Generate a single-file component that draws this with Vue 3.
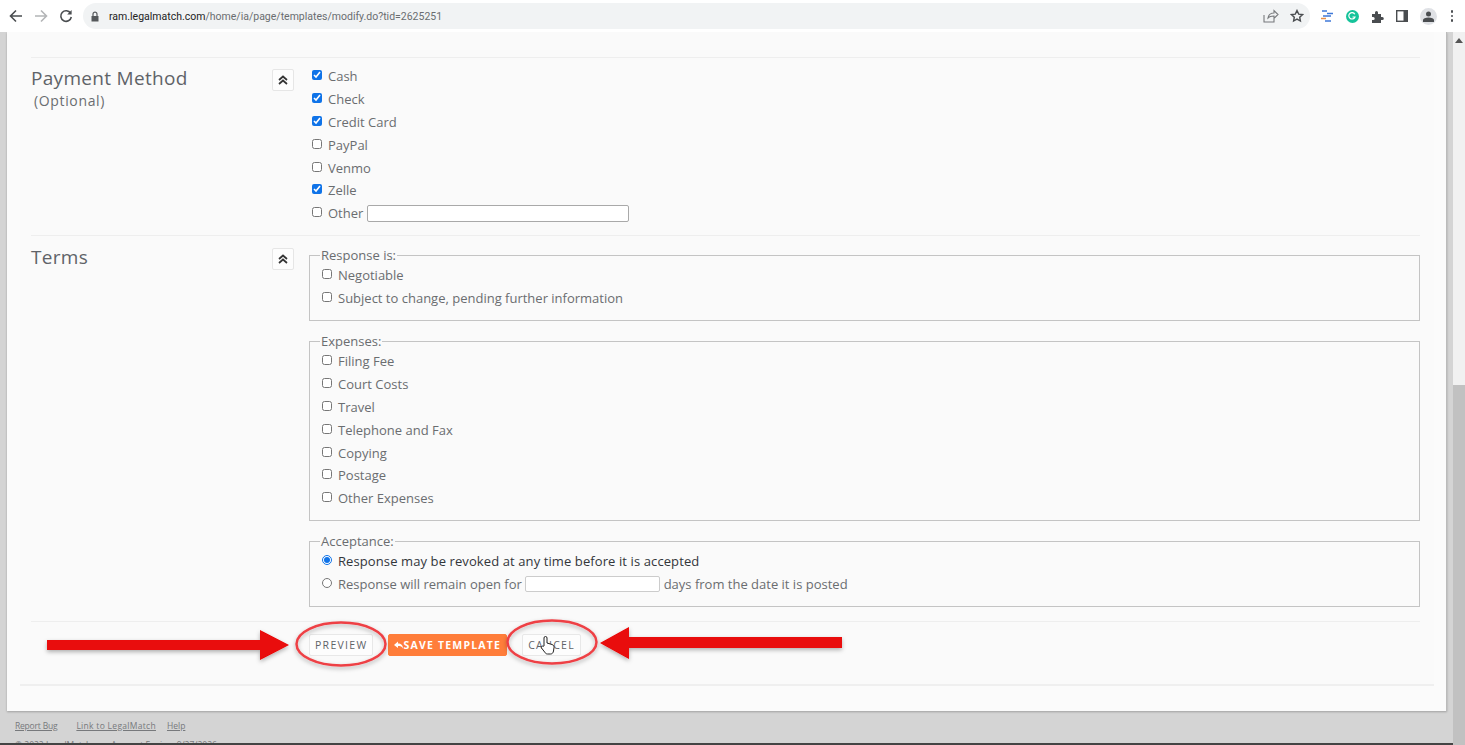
<template>
  <div class="screen">
    <header class="chrome">
      <svg class="nav" width="14" height="14" viewBox="0 0 14 14"><path d="M13 7H2M7 1.5 1.5 7 7 12.5" fill="none" stroke="#4a4d50" stroke-width="1.6"/></svg>
      <svg class="nav" width="14" height="14" viewBox="0 0 14 14"><path d="M1 7h11M7 1.5 12.5 7 7 12.5" fill="none" stroke="#b3b5b7" stroke-width="1.6"/></svg>
      <svg class="nav" width="14" height="14" viewBox="0 0 14 14"><path d="M11.6 4.2A5.3 5.3 0 1 0 12.3 8" fill="none" stroke="#4a4d50" stroke-width="1.6"/><path d="M12.6 1v4.4H8.2z" fill="#4a4d50"/></svg>
      <div class="omnibox">
        <svg width="10" height="11" viewBox="0 0 10 11"><path d="M1.5 5h7v5.5h-7z" fill="#55585b"/><path d="M3 5V3.2a2 2 0 0 1 4 0V5" fill="none" stroke="#55585b" stroke-width="1.2"/></svg>
        <span class="url"><b>ram.legalmatch.com</b>/home/ia/page/templates/modify.do?tid=2625251</span>
        <svg class="share" width="16" height="14" viewBox="0 0 16 14"><path d="M1 6v7h10V9M5 9c.5-3 3-5 6-5V1.500l4 4-4 4V7c-2.500 0-4.500.500-6 2z" fill="none" stroke="#77797c" stroke-width="1.100"/></svg>
        <svg width="14" height="14" viewBox="0 0 14 14"><path d="m7 1.500 1.700 3.600 3.800.500-2.800 2.600.7 3.800L7 10.100 3.600 12l.7-3.800L1.500 5.600l3.800-.500z" fill="none" stroke="#4a4d50" stroke-width="1.400"/></svg>
      </div>
      <div class="tools">
        <svg width="14" height="14" viewBox="0 0 14 14"><path d="M2 2h5M7 4.500h6M3 7h8" stroke="#3f78d8" stroke-width="1.500"/><path d="M1 9.500h5" stroke="#e8904a" stroke-width="1.500"/><path d="M5 12h6" stroke="#3f78d8" stroke-width="1.500"/></svg>
        <span class="gram"><svg width="8" height="8" viewBox="0 0 8 8"><path d="M6.800 2.200A3.200 3.200 0 1 0 7 5H4.500" fill="none" stroke="#fff" stroke-width="1.200"/></svg></span>
        <svg width="13" height="13" viewBox="0 0 13 13"><path d="M1 4h3V2.500a1.500 1.500 0 0 1 3 0V4h3v3h1.300a1.500 1.500 0 0 1 0 3H10v3H1v-3h1.200a1.500 1.500 0 0 0 0-3H1z" fill="#4a4d50"/></svg>
        <svg width="12" height="12" viewBox="0 0 12 12"><rect x=".7" y=".7" width="10.600" height="10.600" fill="none" stroke="#4a4d50" stroke-width="1.400"/><rect x="7.500" y="1" width="4" height="10" fill="#4a4d50"/></svg>
        <span class="avatar"><svg width="11" height="11" viewBox="0 0 11 11"><circle cx="5.500" cy="3" r="2.500" fill="#4a4d50"/><path d="M0 11V9c0-1.500 2.500-2.500 5.500-2.500S11 7.500 11 9v2z" fill="#4a4d50"/></svg></span>
        <span class="dots"><i></i><i></i><i></i></span>
      </div>
    </header>

    <div class="viewport">
      <div class="page">
        <main class="card">
          <div class="panel">
            <section class="row payment">
              <div class="label">
                <h2>Payment Method</h2>
                <p>(Optional)</p>
              </div>
              <button class="toggle"><svg width="10" height="10" viewBox="0 0 10 10"><path d="m1 5 4-3.500L9 5M1 9l4-3.500L9 9" fill="none" stroke="#333" stroke-width="1.700"/></svg></button>
              <div class="options">
                <label v-for="m in methods" :key="m.name" class="opt">
                  <input type="checkbox" :checked="m.on" />{{ m.name }}<input v-if="m.name === 'Other'" class="other-input" type="text" />
                </label>
              </div>
            </section>

            <section class="row terms">
              <div class="label"><h2>Terms</h2></div>
              <button class="toggle"><svg width="10" height="10" viewBox="0 0 10 10"><path d="m1 5 4-3.500L9 5M1 9l4-3.500L9 9" fill="none" stroke="#333" stroke-width="1.700"/></svg></button>
              <div class="fields">
                <fieldset class="response">
                  <legend>Response is:</legend>
                  <label v-for="t in responseOpts" :key="t" class="opt"><input type="checkbox" />{{ t }}</label>
                </fieldset>
                <fieldset class="expenses">
                  <legend>Expenses:</legend>
                  <label v-for="t in expenseOpts" :key="t" class="opt"><input type="checkbox" />{{ t }}</label>
                </fieldset>
                <fieldset class="acceptance">
                  <legend>Acceptance:</legend>
                  <label class="opt selected"><input type="radio" name="accept" checked />Response may be revoked at any time before it is accepted</label>
                  <label class="opt"><input type="radio" name="accept" />Response will remain open for <input class="days-input" type="text" /> days from the date it is posted</label>
                </fieldset>
              </div>
            </section>

            <div class="actions">
              <button class="btn">PREVIEW</button>
              <button class="btn save"><svg width="9" height="8" viewBox="0 0 9 8"><path d="M0 4 4 .5v2c3 0 5 1.500 5 5-1-2-2.500-2.500-5-2.500v2z" fill="#fff"/></svg>SAVE TEMPLATE</button>
              <button class="btn">CANCEL</button>
            </div>
          </div>
        </main>
        <footer class="foot">
          <div class="links"><a>Report Bug</a><a>Link to LegalMatch</a><a>Help</a></div>
          <div class="copy"><span>© 2022 LegalMatch</span><span>Account Expires 9/27/2026</span></div>
        </footer>
      </div>
      <aside class="scrollbar">
        <svg width="8" height="5" viewBox="0 0 8 5"><path d="M0 5 4 0l4 5z" fill="#555"/></svg>
        <div class="thumb"></div>
      </aside>
    </div>

    <!-- video callouts over the page -->
    <svg class="marks" width="1465" height="745" viewBox="0 0 1465 745">
      <defs>
        <filter id="sh" x="-10%" y="-30%" width="120%" height="170%"><feDropShadow dx="0" dy="2" stdDeviation="2" flood-color="#000" flood-opacity=".3"/></filter>
      </defs>
      <g filter="url(#sh)">
        <path d="M47 640h213v-10l29 15-29 15v-10H47z" fill="#e90707"/>
        <path d="M842 637H629v-10l-29 16 29 16v-11h213z" fill="#e90707"/>
        <ellipse cx="341" cy="644" rx="44.500" ry="21.500" fill="none" stroke="#ee4045" stroke-width="2.500"/>
        <ellipse cx="552" cy="642" rx="44.500" ry="21.500" fill="none" stroke="#ee4045" stroke-width="2.500"/>
      </g>
      <path d="M544 646v-8a1.500 1.500 0 0 1 3 0v5l5 1.500c1.500.500 2 1.500 2 3l-.500 3.500c-.300 2-1.500 3-3 3h-3c-1 0-2-.500-2.500-1.500l-3.500-4.500c-.800-1 .500-2.500 1.700-1.700z" fill="#fff" stroke="#222" stroke-width="1"/>
    </svg>
  </div>
</template>

<script setup>
const methods = [
  { name: 'Cash', on: true },
  { name: 'Check', on: true },
  { name: 'Credit Card', on: true },
  { name: 'PayPal', on: false },
  { name: 'Venmo', on: false },
  { name: 'Zelle', on: true },
  { name: 'Other', on: false },
];
const responseOpts = ['Negotiable', 'Subject to change, pending further information'];
const expenseOpts = ['Filing Fee', 'Court Costs', 'Travel', 'Telephone and Fax', 'Copying', 'Postage', 'Other Expenses'];
</script>

<style>
html, body { margin: 0; overflow: hidden; }
</style>

<style scoped>
.screen {
  position: relative;
  display: flex;
  flex-direction: column;
  width: 1465px;
  height: 745px;
  overflow: hidden;
  font-family: "Open Sans", "Liberation Sans", sans-serif;
  color: #6a6d70;
}
.chrome {
  display: flex;
  align-items: center;
  flex: 0 0 32px;
  height: 32px;
  box-sizing: border-box;
  padding: 0 12px 0 9px;
  background: #fff;
  gap: 11px;
}
.nav { flex: none; }
.omnibox {
  display: flex;
  align-items: center;
  gap: 9px;
  flex: 1;
  height: 26px;
  margin-left: -1px;
  padding: 0 6px 0 7px;
  background: #f1f3f4;
  border-radius: 13px;
}
.url {
  flex: 1;
  font: 10.500px "Roboto", sans-serif;
  color: #6a6d70;
}
.url b { font-weight: 400; color: #222; }
.share { margin-right: 2px; }
.tools {
  display: flex;
  align-items: center;
  gap: 12px;
  margin-left: -1px;
}
.gram {
  display: flex;
  align-items: center;
  justify-content: center;
  width: 13px;
  height: 13px;
  background: #15c39a;
  border-radius: 50%;
}
.avatar {
  display: flex;
  align-items: center;
  justify-content: center;
  width: 17px;
  height: 17px;
  background: #dfe1e5;
  border-radius: 50%;
}
.dots { display: flex; flex-direction: column; gap: 2px; margin-left: 2px; }
.dots i { width: 2.500px; height: 2.500px; background: #4a4d50; border-radius: 50%; }

.viewport { display: flex; flex: 1; min-height: 0; }
.page {
  flex: 1;
  min-width: 0;
  padding-left: 7px;
  padding-right: 6px;
  background: #d4d4d4;
  border-bottom: 2px solid #444;
  overflow: hidden;
}
.card {
  box-sizing: border-box;
  height: 679px;
  padding: 0 12px 25px 13px;
  background: #fbfbfb;
  border-right: 1px solid #bbb;
  box-shadow: 0 1px 2px rgba(0,0,0,.25);
}
.panel {
  box-sizing: border-box;
  height: 654px;
  padding: 25px 14px 0 11px;
  background: #fafafa;
  border-bottom: 2px solid #efefef;
}
.row {
  display: grid;
  grid-template-columns: 241px 37px 1fr;
  border-top: 1px solid #eeeeee;
}
.payment { height: 178px; padding-top: 11px; box-sizing: border-box; }
.terms { height: 386px; padding-top: 12px; box-sizing: border-box; }
.label { margin-top: -3px; }
h2 {
  margin: 0;
  font-size: 19px;
  font-weight: 400;
  line-height: 24px;
  letter-spacing: .3px;
  color: #5f6368;
}
.label p {
  margin: 0 0 0 3px;
  font-size: 14px;
  line-height: 22px;
  letter-spacing: .65px;
}
.toggle {
  display: flex;
  align-items: center;
  justify-content: center;
  width: 22px;
  height: 22px;
  padding: 0;
  background: #fdfdfd;
  border: 1px solid #e6e6e6;
  border-radius: 2px;
}
.options { margin-top: -4px; padding-left: 3px; }
.opt {
  display: flex;
  align-items: center;
  height: 22.800px;
  font-size: 13px;
  white-space: pre;
}
input[type="checkbox"], input[type="radio"] {
  width: 10px;
  height: 10px;
  margin: 0 6px 2px 0;
  accent-color: #0f73e8;
}
.other-input {
  box-sizing: border-box;
  width: 262px;
  height: 17px;
  margin-left: 4px;
  background: #fff;
  border: 1px solid #a9a9a9;
  border-radius: 2px;
}
.days-input {
  box-sizing: border-box;
  width: 135px;
  height: 16px;
  margin: 0;
  background: #fff;
  border: 1px solid #ccc;
  border-radius: 2px;
}
.fields { display: flex; flex-direction: column; gap: 13px; }
fieldset {
  box-sizing: border-box;
  margin: 0;
  padding: 2px 0 0 12px;
  border: 1px solid #c4c4c4;
  min-width: 0;
}
legend {
  padding: 0 1px;
  margin-left: -2px;
  font-size: 13px;
  line-height: 14px;
}
.response { height: 73px; }
.expenses { height: 187px; }
.acceptance { height: 73px; }
.selected { color: #33363a; font-weight: 500; letter-spacing: .1px; }
.actions {
  display: flex;
  align-items: center;
  gap: 6px;
  height: 46px;
  padding-left: 278px;
  border-top: 1px solid #eeeeee;
}
.btn {
  height: 22px;
  padding: 0 5px;
  font: 10.500px "Open Sans", sans-serif;
  letter-spacing: 1.300px;
  color: #5f6368;
  background: #fdfdfd;
  border: 1px solid #e8e8e8;
  border-radius: 2px;
}
.save {
  display: flex;
  align-items: center;
  margin: 0 9px;
  padding: 0 5px;
  font-weight: 700;
  letter-spacing: 1.200px;
  color: #fff;
  background: #ff7d3a;
  border-color: #ff7d3a;
}
.foot { font-size: 8.500px; color: #77797c; padding: 5px 0 0 8px; }
.links { display: flex; gap: 19px; height: 18px; align-items: center; }
.links a { text-decoration: underline; }
.links a:nth-child(1) { letter-spacing: -.2px; }
.links a:nth-child(2) { letter-spacing: .3px; }
.links a:nth-child(3) { margin-left: -8px; }
.copy { display: flex; gap: 20px; margin-top: 5px; }
.scrollbar {
  position: relative;
  display: flex;
  flex-direction: column;
  align-items: center;
  flex: 0 0 12px;
  padding-top: 6px;
  background: #f1f1f1;
}
.thumb {
  position: absolute;
  top: 353px;
  bottom: 0;
  left: 0;
  right: 0;
  background: #c1c1c1;
}
.marks { position: absolute; top: 0; left: 0; pointer-events: none; }
</style>
